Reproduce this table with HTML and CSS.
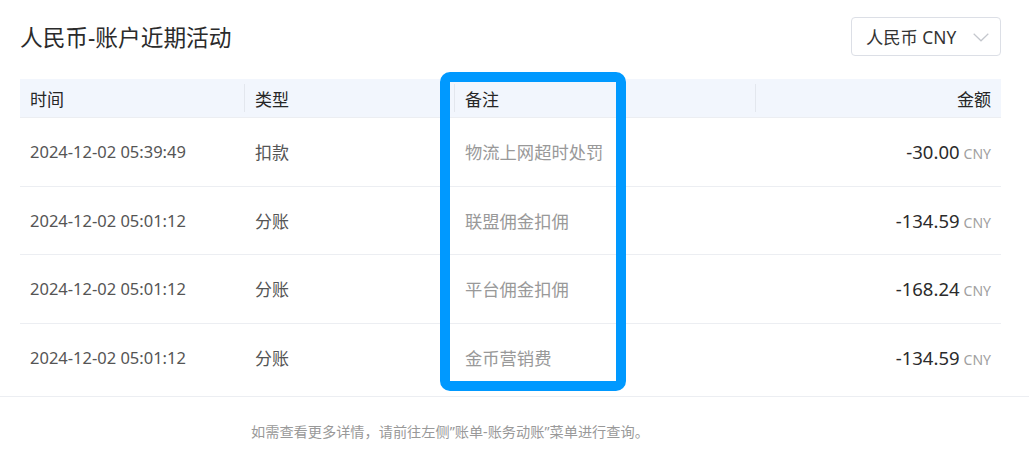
FILE: index.html
```html
<!DOCTYPE html>
<html lang="zh-CN">
<head>
<meta charset="utf-8">
<title>人民币-账户近期活动</title>
<link rel="stylesheet" href="styles.css">
</head>
<body>
<div class="page">
  <div class="head">
    <h1 class="title">人民币-账户近期活动</h1>
    <div class="select">
      <span class="select-text">人民币 CNY</span>
      <svg class="chev" width="16" height="9" viewBox="0 0 16 9"><path d="M0.7 0.8 L8 7.8 L15.3 0.8" fill="none" stroke="#c4c7cd" stroke-width="1.2"/></svg>
    </div>
  </div>
  <div class="table">
    <div class="row thead">
      <div class="cell">时间</div>
      <div class="cell sep">类型</div>
      <div class="cell sep">备注</div>
      <div class="cell sep right">金额</div>
    </div>
    <div class="row">
      <div class="cell time">2024-12-02 05:39:49</div>
      <div class="cell type">扣款</div>
      <div class="cell note">物流上网超时处罚</div>
      <div class="cell right"><span class="amt">-30.00</span><span class="cur">CNY</span></div>
    </div>
    <div class="row">
      <div class="cell time">2024-12-02 05:01:12</div>
      <div class="cell type">分账</div>
      <div class="cell note">联盟佣金扣佣</div>
      <div class="cell right"><span class="amt">-134.59</span><span class="cur">CNY</span></div>
    </div>
    <div class="row">
      <div class="cell time">2024-12-02 05:01:12</div>
      <div class="cell type">分账</div>
      <div class="cell note">平台佣金扣佣</div>
      <div class="cell right"><span class="amt">-168.24</span><span class="cur">CNY</span></div>
    </div>
    <div class="row last">
      <div class="cell time">2024-12-02 05:01:12</div>
      <div class="cell type">分账</div>
      <div class="cell note">金币营销费</div>
      <div class="cell right"><span class="amt">-134.59</span><span class="cur">CNY</span></div>
    </div>
  </div>
  <div class="footer">如需查看更多详情，请前往左侧”账单-账务动账”菜单进行查询。</div>
  <div class="highlight"></div>
</div>
</body>
</html>
```
FILE: styles.css
```css
* { box-sizing: border-box; }
html, body { margin: 0; padding: 0; background: #fff; }
body {
  font-family: "Noto Sans", "Noto Sans CJK SC", sans-serif;
  color: #333;
  width: 1029px;
  height: 464px;
  overflow: hidden;
}
.page { position: relative; width: 1029px; }
.head {
  display: flex;
  justify-content: space-between;
  align-items: flex-start;
  padding: 17px 28px 0 20px;
  height: 79px;
}
.title {
  margin: 0;
  font-size: 22.7px;
  font-weight: normal;
  line-height: 41px;
  color: #2b2b2b;
}
.select {
  width: 150px;
  height: 39px;
  border: 1px solid #dcdfe6;
  border-radius: 4px;
  display: flex;
  align-items: center;
  justify-content: space-between;
  padding: 0 11px 0 14px;
  font-size: 17.3px;
  color: #333;
}
.chev { display: block; margin-top: 1px; }
.table { margin: 0 28px 4px 20px; }
.row {
  display: grid;
  grid-template-columns: 224px 210px 301px 1fr;
  height: 68.5px;
  border-bottom: 1px solid #eceef2;
  align-items: center;
}
.row.last { border-bottom: none; height: 68px; }
.thead {
  height: 39px;
  background: #f2f6fd;
  font-size: 17px;
  color: #262626;
}
.cell { padding: 0 10px; position: relative; white-space: nowrap; }
.thead .cell.sep { padding-left: 11px; }
.thead .cell.sep::before {
  content: "";
  position: absolute;
  left: 0;
  top: 50%;
  margin-top: -14px;
  height: 28px;
  border-left: 1px solid #e3e7ee;
}
.right { text-align: right; }
.time { font-size: 16.5px; color: #555; }
.type { font-size: 17px; color: #555; padding-left: 11px; }
.note { font-size: 17.3px; color: #999; padding-left: 11px; }
.amt { font-size: 18.5px; color: #2b2b2b; }
.cur { font-size: 14px; color: #a0a0a0; margin-left: 4px; }
.footer {
  border-top: 1px solid #eceef2;
  height: 68px;
  padding-left: 251px;
  padding-top: 24px;
  font-size: 14.2px;
  color: #999;
}
.highlight {
  position: absolute;
  left: 440px;
  top: 72px;
  width: 186px;
  height: 319px;
  border: 10px solid #0099ff;
  border-radius: 10px;
  pointer-events: none;
}
```
